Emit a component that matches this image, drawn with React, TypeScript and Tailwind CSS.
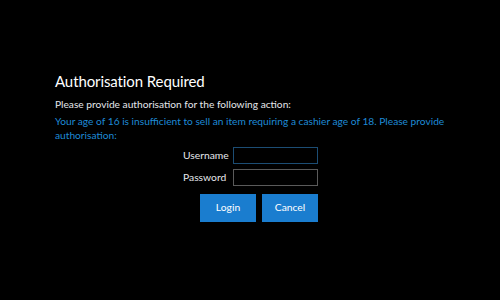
export default function App() {
  return (
    <div
      className="h-[300px] w-[500px] overflow-hidden bg-black pl-[55px] pr-[45px] pt-[71px] text-white"
      style={{ fontFamily: 'Lato, "Noto Sans", sans-serif' }}
    >
      <h1 className="text-[15px] leading-[20px] font-normal tracking-[-0.1px]">Authorisation Required</h1>
      <p className="mt-[6px] text-[10.2px] leading-[14px] text-gray-200">
        Please provide authorisation for the following action:
      </p>
      <p className="mt-[4px] text-[10.2px] leading-[13.5px] text-[#1e8ad6]">
        Your age of 16 is insufficient to sell an item requiring a cashier age of 18. Please provide
        authorisation:
      </p>

      <div className="-ml-[55px] mt-[5px] flex w-[500px] justify-center">
        <div className="grid grid-cols-[45px_85px] items-center gap-x-[5px] gap-y-[5px] pl-[1px]">
          <label className="text-[10.3px] text-gray-200">Username</label>
          <input className="h-[17px] w-[85px] border border-[#1c4d74] bg-black outline-none" />
          <label className="text-[10.3px] text-gray-200">Password</label>
          <input
            type="password"
            className="h-[17px] w-[85px] border border-[#5a5a5a] bg-black outline-none"
          />
          <div className="col-span-2 mt-[3px] flex justify-end gap-[6px]">
            <button className="h-[28px] w-[56px] bg-[#1a7dcf] text-[10.3px] text-white">Login</button>
            <button className="h-[28px] w-[56px] bg-[#1a7dcf] text-[10.3px] text-white">Cancel</button>
          </div>
        </div>
      </div>
    </div>
  );
}
